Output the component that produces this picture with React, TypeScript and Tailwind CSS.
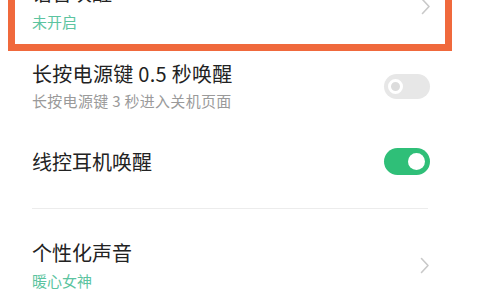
import React from 'react';

const Chevron = () => (
  <svg width="10" height="17" viewBox="0 0 10 17" fill="none" className="shrink-0">
    <path d="M1.5 1.5 L8 8.5 L1.5 15.5" stroke="#c9c9c9" strokeWidth="1.6" strokeLinecap="round" strokeLinejoin="round" />
  </svg>
);

const Toggle = ({ on }: { on: boolean }) =>
  on ? (
    <div className="w-[46px] h-[27px] rounded-full bg-[#2fbf78] flex items-center justify-end pr-[5px] shrink-0">
      <div className="w-[17px] h-[17px] rounded-full bg-white" />
    </div>
  ) : (
    <div className="w-[46px] h-[25px] rounded-full bg-[#e7e7e7] flex items-center pl-[4px] shrink-0">
      <div className="w-[15px] h-[15px] rounded-full border-[3px] border-white bg-[#dcdcdc]" />
    </div>
  );

export default function App() {
  return (
    <div
      className="w-[480px] h-[300px] overflow-hidden bg-white"
      style={{ fontFamily: '"Noto Sans CJK SC", "Noto Sans", sans-serif' }}
    >
      {/* highlighted row, cut off at the top */}
      <div className="mt-[-34px] ml-[8px] w-[444px] border-[7px] border-t-0 border-[#f0693c] bg-white">
        <div className="flex items-center pl-[17px] pr-[14px] pt-[14px] pb-[12px]">
          <div className="flex-1 flex flex-col gap-[6px]">
            <div className="text-[20px] leading-[26px] text-[#222]">语音唤醒</div>
            <div className="text-[15px] leading-[20px] text-[#5cc4a0]">未开启</div>
          </div>
          <Chevron />
        </div>
      </div>

      <div className="flex items-center pl-[32px] pr-[50px] pt-[10px]">
        <div className="flex-1 flex flex-col gap-[4px]">
          <div className="text-[20px] leading-[26px] text-[#222] tracking-[0.3px]">长按电源键 0.5 秒唤醒</div>
          <div className="text-[15px] leading-[20px] text-[#9a9a9a] tracking-[0.3px]">长按电源键 3 秒进入关机页面</div>
        </div>
        <Toggle on={false} />
      </div>

      <div className="flex items-center pl-[32px] pr-[50px] mt-[37px]">
        <div className="flex-1 text-[20px] leading-[26px] text-[#222]">线控耳机唤醒</div>
        <Toggle on={true} />
      </div>

      <div className="ml-[32px] mr-[52px] mt-[33px] h-px bg-[#ececec]" />

      <div className="flex items-center pl-[32px] pr-[50px] mt-[31px]">
        <div className="flex-1 flex flex-col gap-[5px]">
          <div className="text-[20px] leading-[26px] text-[#222]">个性化声音</div>
          <div className="text-[15px] leading-[20px] text-[#5cc4a0]">暖心女神</div>
        </div>
        <Chevron />
      </div>
    </div>
  );
}
